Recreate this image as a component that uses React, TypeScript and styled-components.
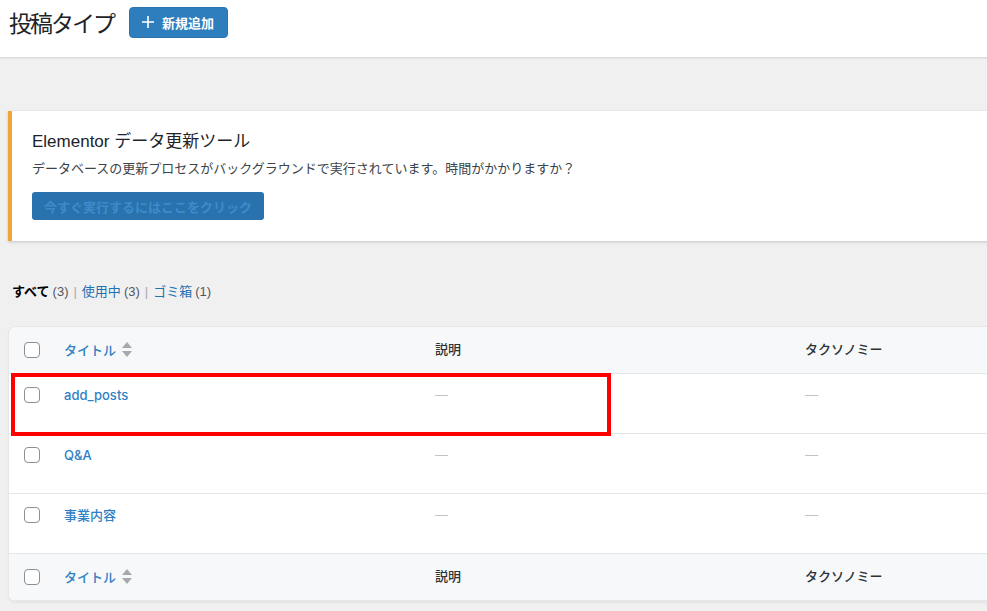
import * as React from 'react';
import styled, { createGlobalStyle } from 'styled-components';

const GlobalStyle = createGlobalStyle`
	html, body {
		margin: 0;
		padding: 0;
		overflow: hidden;
		background: #f0f0f1;
		font-family: "Liberation Sans", "Noto Sans CJK JP", sans-serif;
		color: #3c434a;
		font-size: 13px;
	}
`;

const Page = styled.div`
	width: 1120px;
	min-height: 611px;
`;

const Header = styled.header`
	display: flex;
	align-items: center;
	gap: 15px;
	height: 44px;
	padding: 0 0 13px 9px;
	background: #fff;
	border-bottom: 1px solid #dcdcde;
	box-shadow: 0 1px 1px rgba(0, 0, 0, 0.04);
`;

const PageTitle = styled.h1`
	margin: 0;
	font-size: 23px;
	font-weight: 400;
	letter-spacing: -2px;
	color: #1d2327;
`;

const AddButton = styled.button`
	display: flex;
	align-items: center;
	gap: 8px;
	height: 31px;
	padding: 0 13px 0 12px;
	border: 1px solid #2a75b0;
	border-radius: 4px;
	background: #2e7ebd;
	color: #fff;
	font-family: inherit;
	font-size: 13px;
	font-weight: 700;
`;

const Content = styled.main`
	padding: 53px 0 0 8px;
`;

const Notice = styled.section`
	height: 130px;
	box-sizing: border-box;
	padding: 19px 20px 0 20px;
	background: #fff;
	border-left: 4px solid #f0a53a;
	box-shadow: 0 1px 3px rgba(0, 0, 0, 0.18);
`;

const NoticeTitle = styled.h3`
	margin: 0 0 6px;
	font-size: 17px;
	font-weight: 400;
	color: #1d2327;
	line-height: 23px;
`;

const NoticeText = styled.p`
	margin: 0 0 13px;
	font-size: 13px;
	line-height: 20px;
	color: #3c434a;
`;

const NoticeButton = styled.button`
	width: 232px;
	height: 28px;
	border: none;
	border-radius: 3px;
	background: #2a72ad;
	color: #3d8bcb;
	font-family: inherit;
	font-size: 13px;
	font-weight: 700;
`;

const Filters = styled.ul`
	display: flex;
	align-items: center;
	list-style: none;
	margin: 41px 0 0 4px;
	padding: 0;
	font-size: 13px;
	line-height: 20px;
`;

const FilterItem = styled.li<{ $current?: boolean }>`
	color: ${(p) => (p.$current ? '#000' : '#2271b1')};
	font-weight: ${(p) => (p.$current ? 700 : 400)};
`;

const Count = styled.span`
	color: #50575e;
	font-weight: 400;
	margin-left: 3px;
`;

const Sep = styled.span`
	color: #a7aaad;
	margin: 0 5px;
`;

const TableCard = styled.div`
	position: relative;
	margin-top: 24px;
	background: #fff;
	border: 1px solid #e6e7e9;
	border-radius: 8px;
	overflow: hidden;
	box-shadow: 0 1px 2px rgba(0, 0, 0, 0.06);
`;

const Row = styled.div<{ $head?: boolean }>`
	display: grid;
	grid-template-columns: 55px 371px 370px 1fr;
	align-items: ${(p) => (p.$head ? 'center' : 'start')};
	height: ${(p) => (p.$head ? '47px' : '60px')};
	box-sizing: border-box;
	padding-top: ${(p) => (p.$head ? '0' : '13px')};
	background: ${(p) => (p.$head ? '#f7f8f9' : '#fff')};
	border-bottom: 1px solid #e5e6e8;

	&:last-child {
		border-bottom: none;
	}
`;

const CheckCell = styled.div`
	padding-left: 15px;
	display: flex;
`;

const Checkbox = styled.span`
	width: 16px;
	height: 16px;
	box-sizing: border-box;
	border: 1px solid #8c8f94;
	border-radius: 4px;
	background: #fff;
`;

const Cell = styled.div`
	font-size: 13px;
	line-height: 16px;
`;

const TitleLink = styled.a`
	display: inline-flex;
	align-items: center;
	gap: 6px;
	color: #2f80c4;
	font-family: Inter, "Noto Sans CJK JP", sans-serif;
	font-weight: 500;
	text-decoration: none;
`;

const HeadText = styled.span`
	color: #2c3338;
	font-weight: 500;
`;

const Dash = styled.span`
	color: #c3c4c7;
`;

const Highlight = styled.div`
	position: absolute;
	left: 2px;
	top: 46px;
	width: 600px;
	height: 63px;
	box-sizing: border-box;
	border: 4px solid #ff0000;
	pointer-events: none;
`;

const SortIcon = () => (
	<svg width="10" height="15" viewBox="0 0 10 15">
		<path d="M5 0 L10 6 L0 6 Z" fill="#a7aaad" />
		<path d="M0 9 L10 9 L5 15 Z" fill="#a7aaad" />
	</svg>
);

const PlusIcon = () => (
	<svg width="12" height="12" viewBox="0 0 12 12">
		<path d="M6 0 V12 M0 6 H12" stroke="#fff" strokeWidth="1.6" />
	</svg>
);

const posts = ['add_posts', 'Q&A', '事業内容'];

const HeadRow = () => (
	<Row $head>
		<CheckCell>
			<Checkbox />
		</CheckCell>
		<Cell>
			<TitleLink href="#">
				タイトル
				<SortIcon />
			</TitleLink>
		</Cell>
		<Cell>
			<HeadText>説明</HeadText>
		</Cell>
		<Cell>
			<HeadText>タクソノミー</HeadText>
		</Cell>
	</Row>
);

export default function App() {
	return (
		<Page>
			<GlobalStyle />
			<Header>
				<PageTitle>投稿タイプ</PageTitle>
				<AddButton>
					<PlusIcon />
					新規追加
				</AddButton>
			</Header>
			<Content>
				<Notice>
					<NoticeTitle>Elementor データ更新ツール</NoticeTitle>
					<NoticeText>
						データベースの更新プロセスがバックグラウンドで実行されています。時間がかかりますか？
					</NoticeText>
					<NoticeButton>今すぐ実行するにはここをクリック</NoticeButton>
				</Notice>
				<Filters>
					<FilterItem $current>
						すべて<Count>(3)</Count>
					</FilterItem>
					<Sep>|</Sep>
					<FilterItem>
						使用中<Count>(3)</Count>
					</FilterItem>
					<Sep>|</Sep>
					<FilterItem>
						ゴミ箱<Count>(1)</Count>
					</FilterItem>
				</Filters>
				<TableCard>
					<HeadRow />
					{posts.map((name) => (
						<Row key={name}>
							<CheckCell>
								<Checkbox />
							</CheckCell>
							<Cell>
								<TitleLink href="#">{name}</TitleLink>
							</Cell>
							<Cell>
								<Dash>—</Dash>
							</Cell>
							<Cell>
								<Dash>—</Dash>
							</Cell>
						</Row>
					))}
					<HeadRow />
					<Highlight />
				</TableCard>
			</Content>
		</Page>
	);
}
